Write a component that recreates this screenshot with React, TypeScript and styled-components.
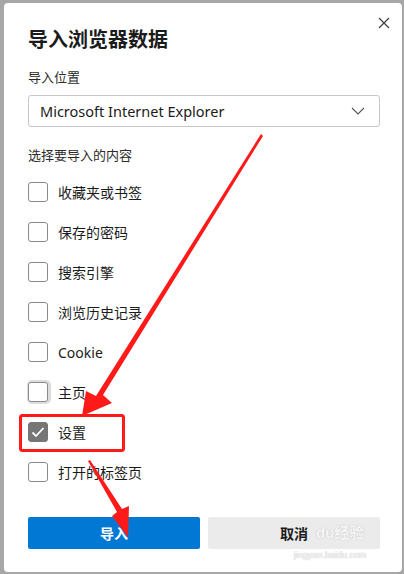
import styled, { createGlobalStyle, css } from 'styled-components';

const GlobalStyle = createGlobalStyle`
  html, body {
    margin: 0;
    padding: 0;
    background: #a7a7a7;
  }
  body {
    font-family: 'Noto Sans CJK SC', 'Noto Sans', sans-serif;
    color: #1b1b1b;
  }
`;

const Page = styled.div`
  width: 404px;
  height: 574px;
  overflow: hidden;
  padding: 3px 2px 2px 4px;
  box-sizing: border-box;
`;

const Dialog = styled.div`
  position: relative;
  height: 100%;
  background: #ffffff;
  border-radius: 4px;
  padding: 22px 22px 0 24px;
  box-sizing: border-box;
  display: flex;
  flex-direction: column;
`;

const CloseButton = styled.button`
  position: absolute;
  top: 10px;
  right: 8px;
  width: 20px;
  height: 20px;
  padding: 0;
  border: none;
  background: none;
  display: flex;
  align-items: center;
  justify-content: center;
  color: #333;
`;

const Title = styled.h1`
  margin: 0;
  font-size: 20px;
  line-height: 28px;
  font-weight: 700;
  color: #1b1b1b;
`;

const FieldLabel = styled.div<{ $top: number }>`
  margin-top: ${(p) => p.$top}px;
  font-size: 13px;
  line-height: 20px;
  color: #2b2b2b;
`;

const Select = styled.div`
  margin-top: 8px;
  width: 352px;
  height: 32px;
  box-sizing: border-box;
  border: 1px solid #c6c6c6;
  border-radius: 3px;
  display: flex;
  align-items: center;
  justify-content: space-between;
  padding: 0 14px 0 11px;
  font-family: 'Noto Sans', sans-serif;
  font-size: 14.5px;
  color: #1b1b1b;
`;

const OptionList = styled.div`
  margin-top: 7px;
  display: flex;
  flex-direction: column;
`;

const OptionRow = styled.label`
  height: 40px;
  display: flex;
  align-items: center;
  gap: 10px;
  font-size: 14px;
  color: #1b1b1b;
`;

const Box = styled.span<{ $checked?: boolean; $focused?: boolean }>`
  width: 20px;
  height: 20px;
  box-sizing: border-box;
  border: 1px solid #8a8a8a;
  border-radius: 3px;
  display: flex;
  align-items: center;
  justify-content: center;
  background: #fff;
  ${(p) =>
    p.$checked &&
    css`
      background: #767676;
      border-color: #767676;
    `}
  ${(p) =>
    p.$focused &&
    css`
      box-shadow: 1px 0 0 2px #dcdcdc;
    `}
`;

const OptionText = styled.span<{ $latin?: boolean }>`
  font-family: ${(p) =>
    p.$latin ? "'Noto Sans', sans-serif" : "'Noto Sans CJK SC', sans-serif"};
`;

const ButtonRow = styled.div`
  margin-top: 25px;
  display: flex;
  gap: 8px;
`;

const Button = styled.button<{ $primary?: boolean }>`
  width: 172px;
  height: 32px;
  border: none;
  border-radius: 2px;
  font-family: 'Noto Sans CJK SC', sans-serif;
  font-size: 14px;
  font-weight: 700;
  background: ${(p) => (p.$primary ? '#0078d4' : '#ebebeb')};
  color: ${(p) => (p.$primary ? '#ffffff' : '#1b1b1b')};
`;

const Annotations = styled.svg`
  position: absolute;
  left: -4px;
  top: -3px;
  pointer-events: none;
`;

const Watermark = styled.div`
  position: absolute;
  left: 312px;
  top: 520px;
  display: flex;
  flex-direction: column;
  align-items: flex-start;
  pointer-events: none;
  color: rgba(255, 255, 255, 0.85);
  text-shadow: 0 0 1px #c8c8c8, 0 0 1px #c8c8c8;
`;

const WatermarkTitle = styled.span`
  font-family: 'Liberation Sans', 'Noto Sans CJK SC', sans-serif;
  font-size: 15px;
  font-weight: 700;
  line-height: 20px;
`;

const WatermarkUrl = styled.span`
  margin-top: 6px;
  margin-left: -22px;
  font-family: 'Liberation Sans', sans-serif;
  font-size: 9px;
  line-height: 12px;
`;

const options = [
  { label: '收藏夹或书签' },
  { label: '保存的密码' },
  { label: '搜索引擎' },
  { label: '浏览历史记录' },
  { label: 'Cookie', latin: true },
  { label: '主页', focused: true },
  { label: '设置', checked: true },
  { label: '打开的标签页' },
];

const App = () => {
  return (
    <>
      <GlobalStyle />
      <Page>
        <Dialog>
          <CloseButton aria-label='关闭'>
            <svg width='12' height='12' viewBox='0 0 12 12'>
              <path d='M1 1 L11 11 M11 1 L1 11' stroke='#3a3a3a' strokeWidth='1.2' />
            </svg>
          </CloseButton>
          <Title>导入浏览器数据</Title>
          <FieldLabel $top={14}>导入位置</FieldLabel>
          <Select>
            <span>Microsoft Internet Explorer</span>
            <svg width='14' height='8' viewBox='0 0 14 8'>
              <path d='M1 1 L7 7 L13 1' fill='none' stroke='#555' strokeWidth='1.1' />
            </svg>
          </Select>
          <FieldLabel $top={18}>选择要导入的内容</FieldLabel>
          <OptionList>
            {options.map((opt) => (
              <OptionRow key={opt.label}>
                <Box $checked={opt.checked} $focused={opt.focused}>
                  {opt.checked && (
                    <svg width='14' height='12' viewBox='0 0 14 12'>
                      <path
                        d='M1.5 6.5 L5 10 L12.5 2'
                        fill='none'
                        stroke='#fff'
                        strokeWidth='1.8'
                      />
                    </svg>
                  )}
                </Box>
                <OptionText $latin={opt.latin}>{opt.label}</OptionText>
              </OptionRow>
            ))}
          </OptionList>
          <ButtonRow>
            <Button $primary>导入</Button>
            <Button>取消</Button>
          </ButtonRow>

          <Watermark>
            <WatermarkTitle>du经验</WatermarkTitle>
            <WatermarkUrl>jingyan.baidu.com</WatermarkUrl>
          </Watermark>

          <Annotations width='404' height='574' viewBox='0 0 404 574'>
            <rect
              x='20.5'
              y='415.5'
              width='103'
              height='35'
              rx='2'
              fill='none'
              stroke='#ff1a1a'
              strokeWidth='3'
            />
            <polygon
              points='261,134 263,136 103,395 112,403 82,416 86,391 96,396'
              fill='#ff1a1a'
            />
            <polygon
              points='88,461 90,460 122,509 129,506 128,537 112,516 117,512'
              fill='#ff1a1a'
            />
          </Annotations>
        </Dialog>
      </Page>
    </>
  );
};

export default App;
